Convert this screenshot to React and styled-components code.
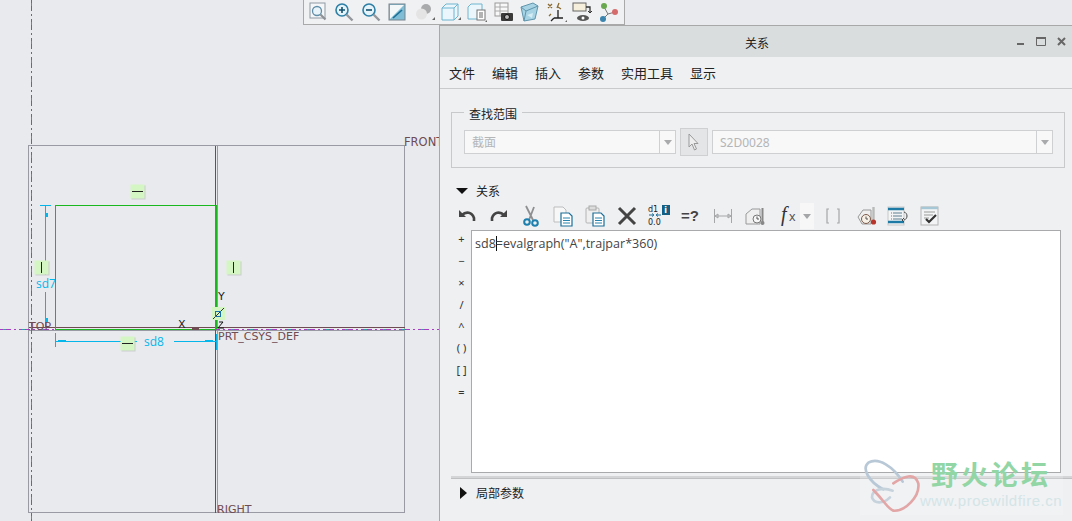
import { createGlobalStyle, styled } from "styled-components";

const GlobalStyle = createGlobalStyle`
  html, body {
    margin: 0;
    background: #e8eaee;
  }
  body {
    font-family: "Noto Sans CJK SC", "Noto Sans", sans-serif;
    overflow: hidden;
  }
`
const Page = styled.div`
  position: relative;
  display: flex;
  width: 1072px;
  height: 521px;
  overflow: hidden;
`
const Canvas = styled.svg`
  display: block;
  flex: none;
  width: 439px;
  height: 521px;
  font-family: "DejaVu Sans", sans-serif;
`
const ViewBar = styled.div`
  position: absolute;
  top: 0;
  left: 303px;
  width: 322px;
  height: 25px;
  display: flex;
  align-items: center;
  gap: 4.4px;
  padding-left: 3px;
  box-sizing: border-box;
  background: #f0f1f3;
  border: 1px solid #a9a9a9;
  border-top: 0;
`
const ViewIcon = styled.svg`
  display: block;
  flex: none;
  width: 22px;
  height: 22px;
`
const Dialog = styled.section`
  flex: 1;
  margin-top: 25px;
  background: #eef0f2;
  border-left: 1px solid #a8a8a8;
  border-top: 1px solid #a8a8a8;
  display: flex;
  flex-direction: column;
`
const TitleBar = styled.header`
  position: relative;
  height: 31px;
  box-sizing: border-box;
  padding: 2px 0 0 2px;
  flex: none;
  display: flex;
  align-items: center;
  justify-content: center;
  background: #dadddd;
  font-size: 12px;
  color: #222;
`
const WindowButtons = styled.div`
  position: absolute;
  right: 6px;
  top: 11px;
  display: flex;
  align-items: center;
  gap: 11px;
`
const MenuBar = styled.nav`
  height: 32px;
  box-sizing: border-box;
  padding: 0 0 0 9px;
  flex: none;
  display: flex;
  align-items: center;
  gap: 17px;
  border-bottom: 1px solid #c9cacc;
  font-size: 13px;
  color: #222;
`
const Body = styled.div`
  flex: 1;
  display: flex;
  flex-direction: column;
  padding: 23px 7px 0 11px;
`
const ScopeGroup = styled.div`
  height: 56px;
  box-sizing: border-box;
  padding: 4px 11px 0 12px;
  border: 1px solid #c8c9cb;
  display: flex;
  align-items: center;
  gap: 4px;
  position: relative;
`
const ScopeLegend = styled.span`
  position: absolute;
  left: 12px;
  top: -8px;
  padding: 0 5px;
  background: #eef0f2;
  font-size: 12px;
  line-height: 17px;
  color: #222;
`
const Select = styled.div`
  width: ${p => p.$width}px;
  height: 24px;
  box-sizing: border-box;
  display: flex;
  align-items: center;
  background: #f8f8f8;
  border: 1px solid #cfd0d2;
  font-size: 12px;
  color: #b4b5b7;
  font-family: "Noto Sans", "Noto Sans CJK SC", sans-serif;
`
const SelectValue = styled.span`
  flex: 1;
  padding-left: 7px;
`
const SelectArrow = styled.span`
  width: 15px;
  height: 100%;
  display: flex;
  align-items: center;
  justify-content: center;
  border-left: 1px solid #cfd0d2;
  &::after {
    content: "";
    border: 4px solid transparent;
    border-top: 5px solid #a9aaac;
    border-bottom: 0;
  }
`
const PickButton = styled.div`
  width: 28px;
  height: 28px;
  box-sizing: border-box;
  display: flex;
  align-items: center;
  justify-content: center;
  background: #e4e5e7;
  border: 1px solid #cfd0d2;
`
const SectionHead = styled.div`
  height: 17px;
  margin-top: ${p => p.$top}px;
  display: flex;
  align-items: center;
  gap: 8px;
  padding-left: ${p => p.$indent}px;
  font-size: 12px;
  color: #222;
`
const TriangleDown = styled.span`
  border: 6px solid transparent;
  border-top: 6px solid #111;
  border-bottom: 0;
`
const TriangleRight = styled.span`
  margin-right: 1px;
  border: 6px solid transparent;
  border-left: 7px solid #111;
  border-right: 0;
`
const ActionBar = styled.div`
  height: 28px;
  margin-top: 3px;
  display: flex;
  align-items: center;
`
const ActionCell = styled.span`
  width: ${p => p.$width || 32}px;
  height: 24px;
  margin-left: ${p => p.$shift || 0}px;
  flex: none;
  display: flex;
  align-items: center;
  justify-content: center;
`
const FxDrop = styled.span`
  width: 14px;
  height: 26px;
  margin-left: -5px;
  flex: none;
  display: flex;
  align-items: center;
  justify-content: center;
  background: #f7f7f8;
  &::after {
    content: "";
    border: 4px solid transparent;
    border-top: 5px solid #a5a6a8;
    border-bottom: 0;
  }
`
const EditorRow = styled.div`
  display: flex;
  height: 243px;
  flex: none;
  margin-right: 4px;
`
const OperatorColumn = styled.div`
  width: 20px;
  flex: none;
  display: flex;
  flex-direction: column;
  padding-left: 1px;
  box-sizing: border-box;
  margin-top: -2px;
`
const Operator = styled.span`
  height: 21.8px;
  display: flex;
  align-items: center;
  justify-content: center;
  font-family: "Noto Sans", sans-serif;
  font-size: 11px;
  color: #333;
`
const Editor = styled.div`
  flex: 1;
  box-sizing: border-box;
  background: #fff;
  border: 1px solid #a9aaac;
  padding: 4px 3px;
  font-family: "Open Sans", sans-serif;
  font-size: 12.55px;
  line-height: 18px;
  color: #444;
`
const Caret = styled.span`
  display: inline-block;
  width: 1px;
  height: 15px;
  margin-right: -1px;
  vertical-align: -3px;
  background: #111;
`
const Divider = styled.div`
  height: 3px;
  margin: 3px -7px 0 0;
  background: #d4d5d7;
  border-bottom: 1px solid #bfc0c2;
  box-sizing: border-box;
`
const Watermark = styled.aside`
  position: absolute;
  left: 860px;
  top: 458px;
  width: 212px;
  height: 60px;
  pointer-events: none;
`
const WatermarkPanel = styled.div`
  position: absolute;
  left: 0;
  top: 15px;
  width: 203px;
  height: 42px;
  background: rgba(255, 255, 255, .18);
`
const WatermarkName = styled.div`
  position: absolute;
  left: 71px;
  top: 0;
  font-size: 27px;
  line-height: 32px;
  font-weight: 700;
  letter-spacing: 3px;
  white-space: nowrap;
  color: #93d6a5;
`
const WatermarkUrl = styled.div`
  position: absolute;
  left: 60px;
  top: 34px;
  font-family: "Liberation Sans", sans-serif;
  font-size: 15px;
  line-height: 18px;
  letter-spacing: .5px;
  white-space: nowrap;
  color: #d3e5e7;
`
const WatermarkLogo = styled.svg`
  position: absolute;
  left: 2px;
  top: 0;
  width: 68px;
  height: 62px;
`

const BROWN = "#6f4b52";
const GREY = "#9a9aa4";
const GREEN = "#19b81f";
const CYAN = "#05b6ea";

function Datum({ d, stroke = "#a93cc4" }) {
  return (
    <>
      <path d={d} stroke={stroke} strokeWidth="1" strokeDasharray="11 3 2 3" />
      <path d={d} stroke="#2ba5a0" strokeWidth="1" strokeDasharray="3 16" strokeDashoffset="-3" />
    </>
  )
}

function Tile({ x, y, vertical }) {
  return (
    <g>
      <rect x={x - 5.5} y={y - 5.5} width="14" height="14" fill="#bfc2c4" opacity=".7" />
      <rect x={x - 6.5} y={y - 6.5} width="14" height="14" fill="#d3f6c2" />
      {vertical
        ? <path d={`M${x + .5} ${y - 5}V${y + 6}`} stroke="#222" />
        : <path d={`M${x - 5} ${y + .5}H${x + 6}`} stroke="#222" />}
    </g>
  )
}

function Sketch() {
  return (
    <Canvas viewBox="0 0 439 521">
      <g fill="none" shapeRendering="crispEdges">
        <rect x="28.5" y="145.5" width="376" height="367" stroke={GREY} />
        <path d="M217.5 146V513M29 330.5H405" stroke={GREY} />
        <path d="M215.5 146V513M29 327.5H405" stroke={BROWN} />
        <Datum d="M31.5 0V521" />
        <Datum d="M0 329.5H439" />
        <path d="M55.5 329V205.5H216" stroke={GREEN} />
        <path d="M55 329.5H216" stroke={GREEN} />
        <path d="M216 205V329" stroke={GREEN} strokeWidth="2" />
        <path d="M40 205.5H51M45.5 205V275M45.5 292V328" stroke={CYAN} />
        <path d="M55.5 333V347M55 341.5H137M174 341.5H216M216.5 334V350" stroke={CYAN} />
      </g>
      <path d="M45 207v10h3v-4h-3zM45 327v-9h3v4h-3z" fill={CYAN} />
      <path d="M58 340h8v2h-8zM205 340h8v2h-8z" fill={CYAN} />
      <rect x="192" y="328" width="7" height="2" fill={BROWN} />
      <Tile x={137} y={191} />
      <Tile x={41} y={267} vertical />
      <Tile x={233} y={267} vertical />
      <Tile x={127} y={343} />
      <rect x="212" y="307" width="13" height="13" fill="#d3f6c2" />
      <path d="M213 319l11-11" stroke="#333" />
      <rect x="215.5" y="311.5" width="5" height="5" fill="none" stroke="#1a6fa8" />
      <path d="M218 328l5-6h-4M218 328h6" stroke="#111" fill="none" />
      <g fontSize="11.5" fill={BROWN}>
        <text x="404" y="146">FRONT</text>
        <text x="29" y="330" fontSize="11">TOP</text>
        <text x="218" y="340" fontSize="11">PRT_CSYS_DEF</text>
        <text x="217" y="513" fontSize="11">RIGHT</text>
      </g>
      <g fontSize="11" fill="#222">
        <text x="178" y="328">X</text>
        <text x="218" y="300">Y</text>
      </g>
      <g fontSize="12" fill={CYAN} fontFamily="'Open Sans', sans-serif">
        <text x="36" y="288">sd7</text>
        <text x="144" y="346">sd8</text>
      </g>
    </Canvas>
  )
}

const viewIcons = [
  <>
    <rect x="3" y="2" width="15" height="15" fill="#f4f6f8" stroke="#8e9aa4" />
    <circle cx="10" cy="10" r="4.5" fill="#e8f4fa" stroke="#5f8ea8" strokeWidth="1.3" />
    <path d="M13.5 13.5l5 5" stroke="#8e9296" strokeWidth="2.2" />
  </>,
  <>
    <circle cx="9" cy="9" r="6" fill="#e5f3fa" stroke="#2d7fa6" strokeWidth="1.6" />
    <path d="M6 9h6M9 6v6" stroke="#13506f" strokeWidth="1.6" />
    <path d="M13.5 13.5l6 6" stroke="#94989c" strokeWidth="2.4" />
  </>,
  <>
    <circle cx="9" cy="9" r="6" fill="#e5f3fa" stroke="#2d7fa6" strokeWidth="1.6" />
    <path d="M6 9h6" stroke="#13506f" strokeWidth="1.6" />
    <path d="M13.5 13.5l6 6" stroke="#94989c" strokeWidth="2.4" />
  </>,
  <>
    <rect x="3" y="3" width="16" height="16" fill="#7fbcd6" stroke="#77868e" />
    <path d="M4 18L18 4H4z" fill="#f4f7f8" />
    <path d="M7 17l9-8" stroke="#1d6f96" strokeWidth="1.6" />
  </>,
  <>
    <circle cx="13" cy="8" r="5" fill="#a9aaab" />
    <circle cx="8.5" cy="13" r="5.5" fill="#e4e4e4" />
    <path d="M19 19h3v-3z" fill="#666" />
  </>,
  <>
    <path d="M3 7l4-4h12v12l-4 4H3z" fill="#eaf6fb" stroke="#6fb4cf" />
    <path d="M3 7h12v12M15 7l4-4" fill="none" stroke="#6fb4cf" />
    <path d="M19 19h3v-3z" fill="#666" />
  </>,
  <>
    <path d="M3 6l3-3h11v8H14v7H3z" fill="#eaf6fb" stroke="#6fb4cf" />
    <rect x="12" y="9" width="8" height="10" fill="#fff" stroke="#777" />
    <path d="M14 12h4M14 14h4M14 16h4" stroke="#666" />
    <path d="M20 21h2v-2z" fill="#666" />
  </>,
  <>
    <rect x="3" y="2" width="13" height="13" fill="#f8f8f8" stroke="#999" />
    <path d="M3 6h13M3 10h13M8 2v13" stroke="#aaa" />
    <rect x="9" y="12" width="12" height="8" rx="1" fill="#3a3a3a" />
    <circle cx="15" cy="16" r="2.5" fill="#bbb" stroke="#111" />
  </>,
  <>
    <path d="M3 6l12-4 5 3-3 13-11 2z" fill="#a7d3e4" stroke="#5f95ad" />
    <path d="M3 6l5 4 12-5M8 10l-2 10" fill="none" stroke="#5f95ad" />
    <path d="M9 14l6-2-1 5z" fill="#d6edf5" />
  </>,
  <>
    <path d="M3 3l4 4M7 3l-4 4M14 2l-2 5" stroke="#8a6a30" strokeWidth="1.3" />
    <path d="M13 9v8M9 17h9M6 20l3-3" stroke="#222" strokeWidth="1.3" fill="none" />
    <path d="M4 15l2-2M16 8l-3-2" stroke="#8a6a30" strokeWidth="1.3" />
    <path d="M20 21h2v-2z" fill="#666" />
  </>,
  <>
    <rect x="2" y="2" width="13" height="8" fill="#f6efdc" stroke="#666" />
    <path d="M15 6h4v5" stroke="#333" fill="none" strokeWidth="1.3" />
    <path d="M17 10l2 2 2-2" stroke="#333" fill="none" />
    <ellipse cx="12" cy="17" rx="6" ry="3" fill="#555" />
    <circle cx="12" cy="17" r="1.5" fill="#fff" />
  </>,
  <>
    <path d="M7 6l4 7-5 5M11 13l7-2" stroke="#777" fill="none" />
    <circle cx="7" cy="5" r="3" fill="#6aa84f" />
    <circle cx="18" cy="11" r="3" fill="#d66b6b" />
    <circle cx="6" cy="18" r="3" fill="#3a84ad" />
  </>,
]

function UndoIcon({ flip }) {
  return (
    <svg width="20" height="14" viewBox="0 0 20 14" style={flip ? { transform: "scaleX(-1)" } : undefined}>
      <path d="M2 1v7h7z" fill="#444" />
      <path d="M5 6c4-4 10-3 12 3v3" fill="none" stroke="#444" strokeWidth="2.6" />
    </svg>
  )
}

function DocIcon({ clip }) {
  return (
    <svg width="22" height="22" viewBox="0 0 22 22">
      {clip
        ? <rect x="2" y="3" width="13" height="15" rx="1" fill="#efefef" stroke="#b4b4b4" />
        : <path d="M2 2h9l3 3v12H2z" fill="#f7f7f7" stroke="#bdbdbd" />}
      {clip && <rect x="5" y="1" width="7" height="4" fill="#dcdcdc" stroke="#aaa" />}
      <path d="M9 8h8l3 3v10H9z" fill="#fff" stroke="#1c6f98" strokeWidth="1.2" />
      <path d="M11 13h7M11 15.5h7M11 18h7" stroke="#2784ae" />
    </svg>
  )
}

function ActionIcons() {
  return (
    <ActionBar>
      <ActionCell><UndoIcon /></ActionCell>
      <ActionCell><UndoIcon flip /></ActionCell>
      <ActionCell>
        <svg width="18" height="22" viewBox="0 0 18 22">
          <path d="M4 1l7 14M12 2L7 15" stroke="#8d8f91" strokeWidth="1.8" />
          <circle cx="5" cy="17" r="2.8" fill="none" stroke="#1c7fad" strokeWidth="2" />
          <circle cx="13" cy="18" r="2.8" fill="none" stroke="#1c7fad" strokeWidth="2" />
        </svg>
      </ActionCell>
      <ActionCell><DocIcon /></ActionCell>
      <ActionCell><DocIcon clip /></ActionCell>
      <ActionCell>
        <svg width="20" height="20" viewBox="0 0 20 20">
          <path d="M2 2l16 16M18 2L2 18" stroke="#444" strokeWidth="3" />
        </svg>
      </ActionCell>
      <ActionCell>
        <svg width="24" height="24" viewBox="0 0 24 24" fontFamily="'DejaVu Sans', sans-serif" fontSize="8" fill="#222">
          <text x="1" y="8">d1</text>
          <path d="M2 11h4M5 9.5L7 11l-2 1.5M14 11h-4M11 9.5L9 11l2 1.5" stroke="#1c6f98" fill="none" />
          <text x="1" y="21">0.0</text>
          <rect x="15" y="1" width="8" height="10" fill="#155f82" />
          <text x="17.2" y="9" fill="#fff" fontWeight="700">i</text>
        </svg>
      </ActionCell>
      <ActionCell>
        <svg width="22" height="18" viewBox="0 0 22 18" fontFamily="'Liberation Sans', sans-serif" fontSize="15" fontWeight="700" fill="#444">
          <text x="1" y="14">=?</text>
        </svg>
      </ActionCell>
      <ActionCell>
        <svg width="20" height="16" viewBox="0 0 20 16">
          <path d="M1.5 1v14M18.5 1v14M2 8h16M2 8l3-2v4zM18 8l-3-2v4z" stroke="#a5a6a8" fill="none" />
        </svg>
      </ActionCell>
      <ActionCell>
        <svg width="22" height="22" viewBox="0 0 22 22">
          <path d="M2 19V9l6-5h8v15z" fill="#efefef" stroke="#999" />
          <circle cx="13" cy="14" r="4" fill="#f6f6f6" stroke="#777" />
          <path d="M13 11.5V14h2" stroke="#555" fill="none" />
          <path d="M18.5 3v14" stroke="#888" strokeWidth="2" />
          <circle cx="18.5" cy="18" r="2" fill="#888" />
        </svg>
      </ActionCell>
      <ActionCell $width={30} $shift={4}>
        <svg width="26" height="24" viewBox="0 0 26 24" fontFamily="'Liberation Serif', serif" fontStyle="italic" fontSize="20" fill="#333">
          <text x="4" y="17">f</text>
          <text x="12" y="17" fontSize="13" fontStyle="normal" fontFamily="'Liberation Sans', sans-serif" fill="#555">x</text>
        </svg>
      </ActionCell>
      <FxDrop />
      <ActionCell $width={38}>
        <svg width="16" height="16" viewBox="0 0 16 16">
          <path d="M4 1H2v14h2M12 1h2v14h-2" fill="none" stroke="#a5a6a8" strokeWidth="1.2" />
        </svg>
      </ActionCell>
      <ActionCell $width={30}>
        <svg width="22" height="22" viewBox="0 0 22 22">
          <path d="M2 12l5-7h8v14H6z" fill="#efefef" stroke="#999" />
          <circle cx="10" cy="14" r="4.5" fill="#f6f0e6" stroke="#7b5a4a" />
          <path d="M10 11.5V14h2" stroke="#555" fill="none" />
          <path d="M17.5 2v13" stroke="#b9b9b9" strokeWidth="2.4" />
          <circle cx="17.5" cy="17" r="2.6" fill="#b8352c" />
        </svg>
      </ActionCell>
      <ActionCell>
        <svg width="22" height="20" viewBox="0 0 22 20">
          <rect x="1" y="1" width="16" height="18" fill="#f3f4f5" stroke="#c8c8c8" />
          <path d="M1 3h16M1 16h16" stroke="#1c7aa4" strokeWidth="2.4" />
          <path d="M4 7h11M4 10h11M4 13h11" stroke="#5c7f90" strokeDasharray="1 1 8 0" />
          <path d="M17 6c4 1 4 7 0 8M17 12l-2 2 2 2" stroke="#444" fill="none" />
        </svg>
      </ActionCell>
      <ActionCell>
        <svg width="20" height="20" viewBox="0 0 20 20">
          <rect x="1" y="1" width="17" height="18" fill="#f3f4f5" stroke="#b4b4b4" />
          <path d="M1 2h17" stroke="#a5c7d6" strokeWidth="2.4" />
          <path d="M4 6h11M4 9h9M4 12h5" stroke="#9a9a9a" />
          <path d="M6 13l3 3 7-7" stroke="#333" strokeWidth="2.2" fill="none" />
        </svg>
      </ActionCell>
    </ActionBar>
  )
}

const operators = ["+", "−", "×", "/", "^", "( )", "[ ]", "="];
const menus = ["文件", "编辑", "插入", "参数", "实用工具", "显示"];

export default function App() {
  return (
    <Page>
      <GlobalStyle />
      <Sketch />
      <ViewBar>
        {viewIcons.map((icon, i) => (
          <ViewIcon key={i} viewBox="0 0 22 22">{icon}</ViewIcon>
        ))}
      </ViewBar>
      <Dialog>
        <TitleBar>
          关系
          <WindowButtons>
            <svg width="9" height="9" viewBox="0 0 9 9"><path d="M1 6h7v2H1z" fill="#666" /></svg>
            <svg width="10" height="9" viewBox="0 0 10 9"><path d="M.5 1.5h9v7h-9z" fill="none" stroke="#666" /><path d="M0 0h10v2H0z" fill="#666" /></svg>
            <svg width="9" height="9" viewBox="0 0 9 9"><path d="M1 1l7 7M8 1L1 8" stroke="#666" strokeWidth="2" /></svg>
          </WindowButtons>
        </TitleBar>
        <MenuBar>
          {menus.map(m => <span key={m}>{m}</span>)}
        </MenuBar>
        <Body>
          <ScopeGroup>
            <ScopeLegend>查找范围</ScopeLegend>
            <Select $width={212}>
              <SelectValue>截面</SelectValue>
              <SelectArrow />
            </Select>
            <PickButton>
              <svg width="12" height="18" viewBox="0 0 12 18">
                <path d="M1 1v13l3-3 2.5 6 2-1-2.5-5.5H10z" fill="#eee" stroke="#999" />
              </svg>
            </PickButton>
            <Select $width={341}>
              <SelectValue>S2D0028</SelectValue>
              <SelectArrow />
            </Select>
          </ScopeGroup>
          <SectionHead $indent={5} $top={14}><TriangleDown />关系</SectionHead>
          <ActionIcons />
          <EditorRow>
            <OperatorColumn>
              {operators.map(o => <Operator key={o}>{o}</Operator>)}
            </OperatorColumn>
            <Editor>sd8<Caret />=evalgraph("A",trajpar*360)</Editor>
          </EditorRow>
          <Divider />
          <SectionHead $indent={9} $top={5}><TriangleRight />局部参数</SectionHead>
        </Body>
      </Dialog>
      <Watermark>
        <WatermarkPanel />
        <WatermarkLogo viewBox="36 54 204 186" fill="none" strokeWidth="8" strokeLinecap="round">
          <path d="M158 125C130 80 85 50 55 68C35 85 55 125 100 148" stroke="#b8c8d6" />
          <path d="M128 152C95 140 65 150 66 172C72 192 100 192 120 172" stroke="#c6d2dc" />
          <path d="M130 130C160 110 195 95 205 130C210 170 165 215 130 212C112 205 105 185 70 150" stroke="#e3a6a6" />
        </WatermarkLogo>
        <WatermarkName>野火论坛</WatermarkName>
        <WatermarkUrl>www.proewildfire.cn</WatermarkUrl>
      </Watermark>
    </Page>
  )
}
